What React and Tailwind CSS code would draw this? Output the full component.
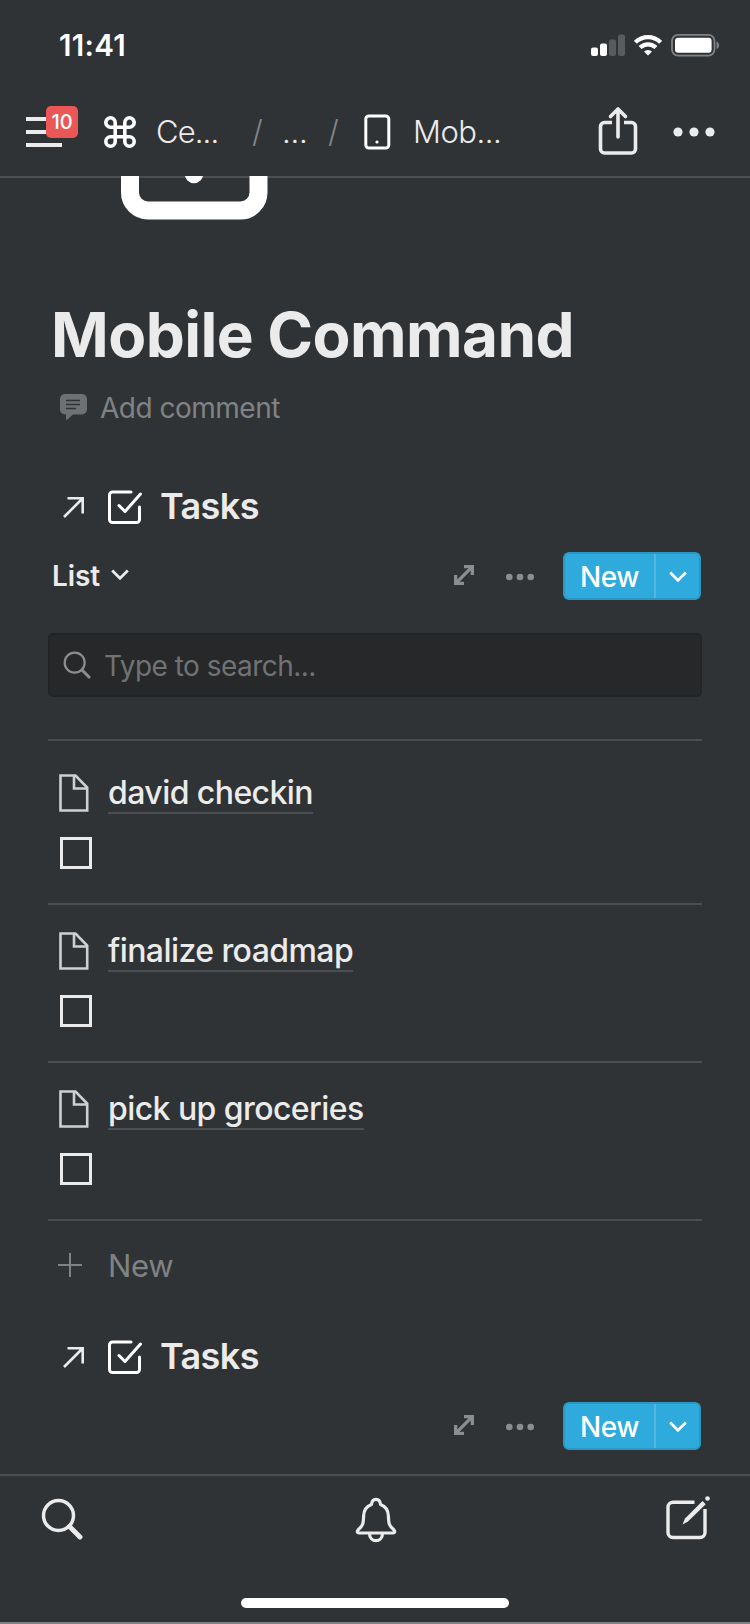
const tasks = ["david checkin", "finalize roadmap", "pick up groceries"];

function StatusBar() {
  return (
    <div className="flex h-[88px] shrink-0 items-center justify-between pl-[59px] pr-[30px]">
      <span className="pt-[2px] text-[29.5px] font-semibold leading-[90px] tracking-[0.3px] text-white">11:41</span>
      <div className="flex items-center pt-[1px]">
        <svg className="h-[22px] w-[34px]" viewBox="0 0 34 22" fill="#fff">
          <rect x="0" y="13.5" width="7" height="8.5" rx="2" />
          <rect x="9" y="9.5" width="7" height="12.5" rx="2" />
          <rect x="18" y="5.5" width="7" height="16.5" rx="2" fill="#595c5e" />
          <rect x="27" y="0.5" width="7" height="21.5" rx="2" fill="#595c5e" />
        </svg>
        <svg className="ml-[9px] h-[22px] w-[28px]" viewBox="0 0 28 22" fill="none" stroke="#fff" strokeWidth="4.2">
          <path d="M1.4 8.3a17.9 17.9 0 0 1 25.2 0" />
          <path d="M6.1 13.6a11.200 11.200 0 0 1 15.8 0" />
          <path d="M14 21.5l-4-4a5.8 5.8 0 0 1 8 0z" fill="#fff" stroke="none" />
        </svg>
        <svg className="ml-[9px] h-[24px] w-[49px]" viewBox="0 0 49 24" fill="none">
          <rect x="1" y="1.8" width="42.5" height="20.8" rx="6" stroke="#808385" strokeWidth="1.8" />
          <rect x="4" y="4.7" width="36.6" height="15" rx="3.2" fill="#fff" />
          <path d="M45.5 8.5c3.5 1 3.5 6.600 0 7.600z" fill="#808385" />
        </svg>
      </div>
    </div>
  );
}

function NavBar() {
  return (
    <div className="flex h-[90px] shrink-0 items-center border-b-2 border-[#4b4f51] pl-[26px] pr-[35px] text-[31px] text-[#ebebeb]">
      <div className="relative flex h-[30px] w-[36px] flex-col justify-between">
        <i className="h-1 bg-[#ebebeb]" />
        <i className="h-1 bg-[#ebebeb]" />
        <i className="h-1 bg-[#ebebeb]" />
        <span className="absolute -top-[11px] left-[20px] flex h-8 w-8 items-center justify-center rounded-[5px] bg-[#eb5757] pb-[1px] text-[20px] font-medium leading-none text-white">
          10
        </span>
      </div>
      <svg className="ml-[42px] h-[32px] w-[32px]" viewBox="0 0 32 32" fill="none" stroke="#fff" strokeWidth="3.6">
        <path d="M20.800 6.500v19a4.700 4.700 0 1 0 4.700-4.700h-19a4.700 4.700 0 1 0 4.700 4.700v-19a4.700 4.700 0 1 0-4.700 4.700h19a4.700 4.700 0 1 0-4.700-4.700" />
      </svg>
      <span className="ml-[20px] w-[96px] font-light tracking-[-0.9px]">Ce...</span>
      <span className="w-[30px] font-light text-[#82858a]">/</span>
      <span className="w-[46px] font-light tracking-[-0.3px]">...</span>
      <span className="w-[36px] font-light text-[#82858a]">/</span>
      <svg className="h-[36px] w-[27px]" viewBox="0 0 27 36" fill="none" stroke="#fff" strokeWidth="3">
        <rect x="1.8" y="2" width="23" height="32" rx="3" />
        <circle cx="13" cy="28" r="1.600" fill="#fff" stroke="none" />
      </svg>
      <span className="ml-[22px] font-light tracking-[-0.5px]">Mob...</span>
      <svg className="mb-[3px] ml-auto h-[50px] w-[40px]" viewBox="0 0 40 50" fill="none" stroke="#ebebeb" strokeWidth="3.600" strokeLinecap="round" strokeLinejoin="round">
        <path d="M14 16.500H6.500a4 4 0 0 0-4 4V43a4 4 0 0 0 4 4h27a4 4 0 0 0 4-4V20.500a4 4 0 0 0-4-4H26" strokeLinecap="butt" />
        <path d="M20 31V3M12.500 10.500 20 3l7.500 7.500" />
      </svg>
      <svg className="ml-[35px] h-[10px] w-[42px]" viewBox="0 0 42 10" fill="#ebebeb">
        <circle cx="5" cy="5" r="4.600" />
        <circle cx="21" cy="5" r="4.600" />
        <circle cx="37" cy="5" r="4.600" />
      </svg>
    </div>
  );
}

function SearchIcon({ className, stroke, width }) {
  return (
    <svg className={className} viewBox="0 0 42 42" fill="none" stroke={stroke} strokeLinecap="round">
      <circle cx="17.500" cy="17.500" r="15" strokeWidth={width} />
      <path d="M28.500 28.500 39 39" strokeWidth={width * 1.4} />
    </svg>
  );
}

function Chevron({ className, color }) {
  return (
    <svg className={className} viewBox="0 0 18 12" fill="none" stroke={color} strokeWidth="2.700">
      <path d="M1.200 1.500 9 9.300l7.800-7.800" />
    </svg>
  );
}

function DatabaseHeader({ view }) {
  return (
    <>
      <div className="flex h-[60px] items-center">
        <svg className="ml-[15px] mt-[1px] h-[22px] w-[22px]" viewBox="0 0 22 22" fill="none" stroke="#ebebeb" strokeWidth="2.600">
          <path d="M1 21 19.500 2.500M4.500 2.300h15.200v15.200" />
        </svg>
        <svg className="ml-[23px] mt-[1px] h-[34px] w-[34px]" viewBox="0 0 34 34" fill="none" stroke="#fff" strokeWidth="3" strokeLinejoin="round" strokeLinecap="round">
          <path d="M23 2H4.500a3 3 0 0 0-3 3v24.500a3 3 0 0 0 3 3h24a3 3 0 0 0 3-3V17" />
          <path d="m11 15.500 6 6L32.500 4" />
        </svg>
        <h2 className="ml-[18px] text-[36px] font-semibold leading-none tracking-[-0.600px]">Tasks</h2>
      </div>
      <div className="mt-4 flex h-12 items-center pl-1 pr-px">
        {view && (
          <div className="flex items-center gap-[11px] text-[28px] font-semibold leading-none tracking-[-0.100px]">
            {view}
            <Chevron className="mb-[2px] h-[12px] w-[18px]" color="#ebebeb" />
          </div>
        )}
        <svg className="ml-auto mb-[2px] h-[20px] w-[20px]" viewBox="0 0 20 20" fill="#8b8e90">
          <path d="M10 0h10v10h-3.300V5.600L5.600 16.700H10V20H0V10h3.300v4.400L14.400 3.300H10z" />
        </svg>
        <svg className="ml-[32px] mt-[2px] h-[8px] w-[28px]" viewBox="0 0 28 8" fill="#8b8e90">
          <circle cx="3.300" cy="4" r="3.300" />
          <circle cx="14" cy="4" r="3.300" />
          <circle cx="24.700" cy="4" r="3.300" />
        </svg>
        <div className="ml-[29px] flex h-12 w-[138px] rounded-[6px] border-2 border-[#2a98c5] bg-[#2eaadc] text-white">
          <span className="flex flex-1 items-center justify-center border-r-2 border-[#52b8e2] pt-[1px] text-[28px] font-medium leading-none tracking-[-0.500px]">
            New
          </span>
          <span className="flex w-[43px] items-center justify-center pt-[1px]">
            <Chevron className="h-[12px] w-[18px]" color="#fff" />
          </span>
        </div>
      </div>
    </>
  );
}

function TaskRow({ title }) {
  return (
    <li className="border-b-2 border-[#4b4f51] pb-[34px] pl-[11px] pt-[25px]">
      <div className="flex h-[42px] items-start">
        <svg className="mt-[2px] h-[38px] w-[30px]" viewBox="0 0 30 38" fill="none" stroke="#cfd0d1" strokeWidth="2.600">
          <path d="M1.500 1.500h15L28.200 13.500v23H1.500z" />
          <path d="M15 1.500V14.500h13" />
        </svg>
        <span className="ml-[19px] h-[42px] border-b-2 border-[#4b4f51] text-[32px] font-medium leading-[42px] tracking-[-0.570px]">
          {title}
        </span>
      </div>
      <div className="ml-px mt-[23px] h-8 w-8 border-3 border-[#ebebeb]" />
    </li>
  );
}

function TabBar() {
  return (
    <div className="flex h-[150px] shrink-0 flex-col border-y-2 border-t-[#4b4f51] border-b-[#7f8183]">
      <div className="flex items-start justify-between pl-[41px] pr-[40px] pt-[19px]">
        <SearchIcon className="mt-[3px] h-[42px] w-[42px]" stroke="#ebebeb" width={3.5} />
        <svg className="ml-[4px] mt-[2px] h-[46px] w-[42px]" viewBox="0 0 42 46" fill="none" stroke="#ebebeb" strokeWidth="3.200" strokeLinejoin="round">
          <path d="M16.500 7.500C17 .7 25 .7 25.500 7.500 31 9.500 33.200 13.500 33.400 19c.2 8.500 1 10 5.600 14 1.200 1.300.8 3-1 3H4c-1.800 0-2.200-1.700-1-3 4.600-4 5.400-5.500 5.600-14 .2-5.500 2.400-9.500 7.900-11.500z" />
          <path d="M14.500 36.500c0 9.500 13 9.500 13 0" />
        </svg>
        <svg className="h-[46px] w-[45px]" viewBox="0 0 45 46" fill="none" stroke="#ebebeb" strokeWidth="3.400">
          <path d="M29.500 7.300H8a5 5 0 0 0-5 5V37.500a5 5 0 0 0 5 5h27a5 5 0 0 0 5-5V14" />
          <path d="M17.500 29.500 20 23.500 37.500 6l3.200 3.200L23 26.500z" fill="#ebebeb" stroke="none" />
          <circle cx="42.500" cy="3.500" r="2.300" fill="#ebebeb" stroke="none" />
        </svg>
      </div>
      <div className="mx-auto mb-[14px] mt-auto h-[10px] w-[268px] rounded-full bg-white" />
    </div>
  );
}

export default function App() {
  return (
    <div className="flex h-[1624px] w-[750px] flex-col overflow-hidden bg-[#2f3335] font-['Inter',sans-serif] text-[#ebebeb]">
      <StatusBar />
      <NavBar />
      <main className="z-10 -mt-[2px] h-[1298px] shrink-0 overflow-hidden px-12">
        <svg className="ml-[73px] h-[44px] w-[147px]" viewBox="0 0 147 44" fill="none">
          <rect x="9" y="-140" width="128.500" height="174.500" rx="18" stroke="#fff" strokeWidth="18" />
          <circle cx="73" cy="-2" r="9.200" fill="#fff" />
        </svg>
        <h1 className="mt-[78px] pl-[3px] text-[62px] font-bold leading-[73px] tracking-[-0.550px]">Mobile Command</h1>
        <div className="flex h-[72px] items-center pl-3 text-[28px] tracking-[-0.500px] text-[#808385]">
          <svg className="h-[26px] w-[27px]" viewBox="0 0 27 26" fill="none">
            <path d="M5 0h17a5 5 0 0 1 5 5v10.500a5 5 0 0 1-5 5h-9L7.500 25.500C6.700 26 6 25.800 6 25v-4.500H5a5 5 0 0 1-5-5V5a5 5 0 0 1 5-5z" fill="#6d7173" />
            <path d="M6 6.500h14M6 10.500h14M6 14.500h10" stroke="#2f3335" strokeWidth="1.400" />
          </svg>
          <span className="ml-[13px] pt-[1px]">Add comment</span>
        </div>
        <div className="h-[33px]" />
        <DatabaseHeader view="List" />
        <div className="mt-[33px] flex h-16 items-center rounded-[5px] border-2 border-[#232426] bg-[#272829] pl-[13px] text-[28px] tracking-[-0.530px] text-[#707274]">
          <SearchIcon className="h-[28px] w-[28px]" stroke="#8b8d8f" width={3.3} />
          <span className="ml-[13px] pt-[1px]">Type to search...</span>
        </div>
        <ul className="mt-[42px] border-t-2 border-[#4b4f51] pt-[6px]">
          {tasks.map((title) => (
            <TaskRow key={title} title={title} />
          ))}
        </ul>
        <div className="flex h-[90px] items-center pl-[10px] text-[31px] tracking-[-0.300px] text-[#808385]">
          <svg className="mb-[2px] h-[24px] w-[24px]" viewBox="0 0 24 24" stroke="#808385" strokeWidth="2">
            <path d="M12 0v24M0 12h24" />
          </svg>
          <span className="ml-[26px]">New</span>
        </div>
        <div className="h-[15px]" />
        <DatabaseHeader />
      </main>
      <TabBar />
    </div>
  );
}
